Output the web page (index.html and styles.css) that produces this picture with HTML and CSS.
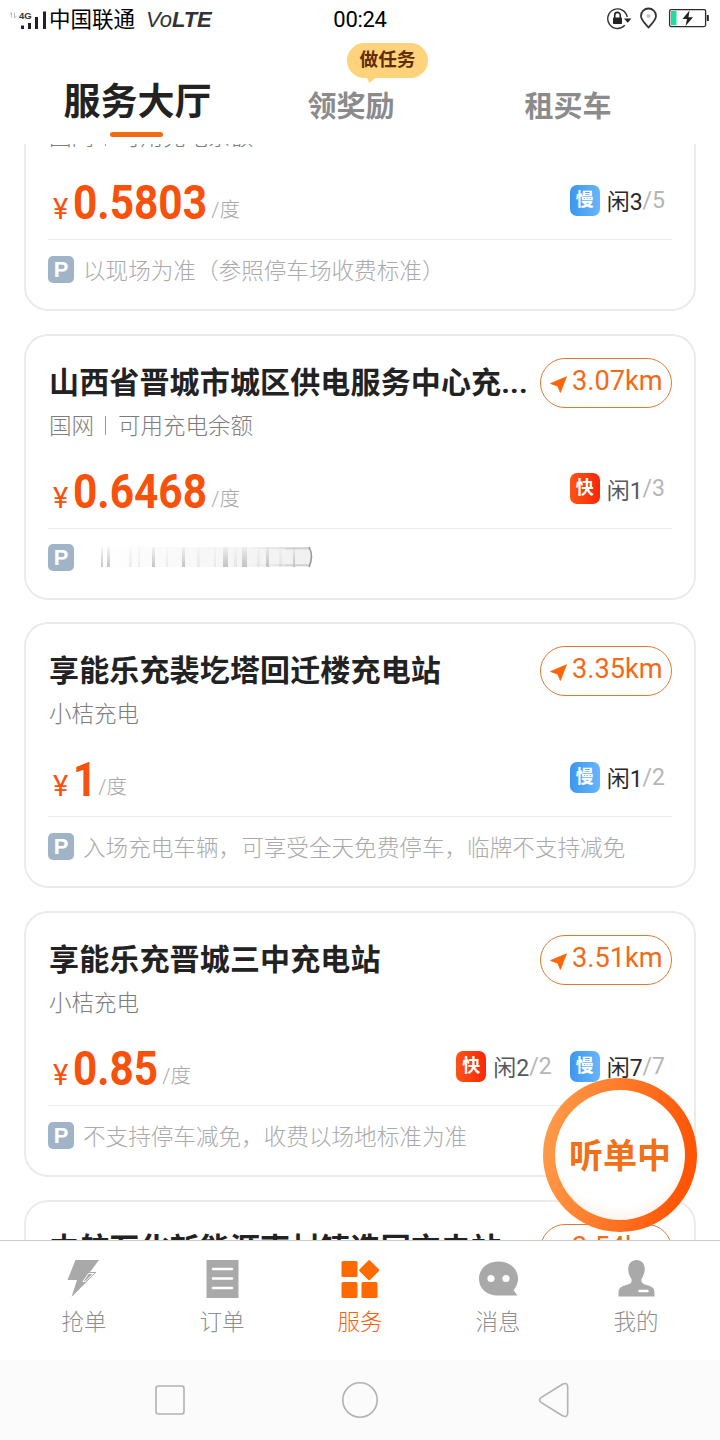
FILE: index.html
```html
<!DOCTYPE html>
<html lang="zh-CN">
<head>
<meta charset="utf-8">
<title>服务大厅</title>
<link rel="stylesheet" href="styles.css">
</head>
<body>
<svg class="defs" width="0" height="0" aria-hidden="true">
  <symbol id="arrow" viewBox="0 0 17 17"><path d="M0.5 7.5 L16.5 0.8 L10.4 16.5 L7.8 10.2 Z" fill="#f9660b" stroke="#f9660b" stroke-width="0.8" stroke-linejoin="round"/></symbol>
</svg>
<div class="screen">
  <header class="status">
    <div class="status-left">
      <svg class="signal" width="40" height="24" viewBox="0 0 40 24">
        <path d="M2.5 6.5V1.5L0.5 3.5M5.5 1.5V7L7.5 5" fill="none" stroke="#bbb" stroke-width="1"/>
        <text x="10" y="8" class="g4">4G</text>
        <path d="M12 14.5h3v3.500h-3zM19 12h3v6h-3zM26 6h3v12h-3zM34 0.500h3v17.500h-3z" fill="#222"/>
      </svg>
      <span class="carrier">中国联通</span>
      <span class="volte">Vo<b>LTE</b></span>
    </div>
    <span class="clock">00:24</span>
    <div class="status-right">
      <svg width="102" height="24" viewBox="0 0 102 24">
        <path d="M17.8 18.300A9.800 9.800 0 1 1 20.200 10" fill="none" stroke="#333" stroke-width="1.400"/>
        <path d="M17 11.500h7.400l-3.700 4.200z" fill="#222"/>
        <rect x="6" y="10.500" width="9" height="6.500" rx="0.800" fill="#222"/>
        <path d="M7.700 11V8.200a2.800 2.800 0 0 1 5.600 0V11" fill="none" stroke="#222" stroke-width="1.600"/>
        <path d="M41.500 20.500C38 16.500 34 13 34 9a7.500 7.500 0 0 1 15 0c0 4-4 7.500-7.500 11.500z" fill="none" stroke="#333" stroke-width="1.800"/>
        <circle cx="41.500" cy="9" r="2" fill="#c4c4c4"/>
        <rect x="62.600" y="2.600" width="36" height="17" rx="1.500" fill="none" stroke="#2b2b33" stroke-width="1.300"/>
        <rect x="64" y="4" width="5.500" height="14.200" fill="#22dba0"/>
        <path d="M99.800 8h2v6h-2z" fill="#222"/>
        <path d="M82.500 3.500L75.500 12h4.500l-1.500 7 7.500-8.800h-4.500z" fill="#222"/>
      </svg>
    </div>
  </header>
  <nav class="tabs">
    <div class="tab tab-on">服务大厅</div>
    <div class="tab tab-mid">领奖励<span class="bubble">做任务</span></div>
    <div class="tab tab-end">租买车</div>
  </nav>

  <main class="list">
    <section class="card">
      <div class="head"><h2>充电站</h2></div>
      <div class="sub">国网<i></i>可用充电余额</div>
      <div class="mid">
        <div class="price"><span class="yen">¥</span><svg width="134" height="40"><text x="0" y="38" textLength="134" lengthAdjust="spacingAndGlyphs">0.5803</text></svg><span class="unit">/度</span></div>
        <div class="ports"><span class="port"><b class="chip slow">慢</b><em class="dark">闲3</em>/5</span></div>
      </div>
      <div class="park"><b>P</b><span>以现场为准（参照停车场收费标准）</span></div>
    </section>

    <section class="card">
      <div class="head"><h2>山西省晋城市城区供电服务中心充...</h2><span class="dist"><svg width="17" height="17"><use href="#arrow"/></svg>3.07km</span></div>
      <div class="sub">国网<i></i>可用充电余额</div>
      <div class="mid">
        <div class="price"><span class="yen">¥</span><svg width="134" height="40"><text x="0" y="38" textLength="134" lengthAdjust="spacingAndGlyphs">0.6468</text></svg><span class="unit">/度</span></div>
        <div class="ports"><span class="port"><b class="chip fast">快</b><em>闲1</em>/3</span></div>
      </div>
      <div class="park"><b>P</b>
        <svg class="smear" width="222" height="26" viewBox="0 0 222 26">
          <defs>
            <linearGradient id="fade" x1="0" x2="1" y1="0" y2="0"><stop offset="0" stop-color="#bbb" stop-opacity="0"/><stop offset="1" stop-color="#bbb"/></linearGradient>
            <linearGradient id="down" x1="0" x2="0" y1="0" y2="1"><stop offset="0" stop-color="#999" stop-opacity="0.1"/><stop offset="1" stop-color="#999" stop-opacity="0.75"/></linearGradient>
          </defs>
          <rect x="0" y="3" width="216" height="20" fill="url(#fade)" opacity="0.22"/>
          <path d="M6 3h2v20h-2zM12 3h3v20h-3zM57 3h3v20h-3zM87 3h3v20h-3zM128 3h5v20h-5zM147 3h5v20h-5zM171 3h3v20h-3zM198 3h2v20h-2z" fill="url(#down)" opacity="0.75"/>
          <path d="M34 3h3v20h-3zM43 3h2v20h-2zM71 3h2v20h-2zM102 3h3v20h-3zM119 3h2v20h-2zM139 3h3v20h-3zM162 3h3v20h-3zM184 3h3v20h-3z" fill="url(#down)" opacity="0.22"/>
          <path d="M155 4h60M155 21h60" stroke="url(#fade)" stroke-width="2" opacity="0.5"/>
          <path d="M190 4h25v1.500h-25zM190 21h25v1h-25z" fill="#ccc" opacity="0.7"/>
          <path d="M214 3q5 9 0 20" fill="none" stroke="#999" stroke-width="1.500"/>
        </svg>
      </div>
    </section>

    <section class="card">
      <div class="head"><h2>享能乐充裴圪塔回迁楼充电站</h2><span class="dist"><svg width="17" height="17"><use href="#arrow"/></svg>3.35km</span></div>
      <div class="sub">小桔充电</div>
      <div class="mid">
        <div class="price"><span class="yen">¥</span><svg width="21" height="40"><text x="0" y="38" textLength="24" lengthAdjust="spacingAndGlyphs">1</text></svg><span class="unit">/度</span></div>
        <div class="ports"><span class="port"><b class="chip slow">慢</b><em class="dark">闲1</em>/2</span></div>
      </div>
      <div class="park"><b>P</b><span>入场充电车辆，可享受全天免费停车，临牌不支持减免</span></div>
    </section>

    <section class="card">
      <div class="head"><h2>享能乐充晋城三中充电站</h2><span class="dist"><svg width="17" height="17"><use href="#arrow"/></svg>3.51km</span></div>
      <div class="sub">小桔充电</div>
      <div class="mid">
        <div class="price"><span class="yen">¥</span><svg width="85" height="40"><text x="0" y="38" textLength="85" lengthAdjust="spacingAndGlyphs">0.85</text></svg><span class="unit">/度</span></div>
        <div class="ports"><span class="port"><b class="chip fast">快</b><em>闲2</em>/2</span><span class="port"><b class="chip slow">慢</b><em class="dark">闲7</em>/7</span></div>
      </div>
      <div class="park"><b>P</b><span>不支持停车减免，收费以场地标准为准</span></div>
    </section>

    <section class="card">
      <div class="head"><h2>中航石化新能源南村铸造园充电站</h2><span class="dist"><svg width="17" height="17"><use href="#arrow"/></svg>3.54km</span></div>
    </section>
  </main>

  <div class="fab"><span>听单中</span></div>

  <nav class="tabbar">
    <div class="item">
      <svg width="40" height="40" viewBox="0 0 40 40"><path d="M11.500 1H35L26 13h6.500L7.500 38l5.500-17H3.500z" fill="#a9a9a9"/><path d="M29.500 14.500l-5 0-5.500 8 2 0z" fill="#a9a9a9" stroke="#fff" stroke-width="1"/></svg>
      <span>抢单</span>
    </div>
    <div class="item">
      <svg width="40" height="40" viewBox="0 0 40 40"><path d="M4.500 1h32v38h-32z" fill="#a9a9a9"/><path d="M11 10h19M11 19.500h19M11 29h19" stroke="#fff" stroke-width="2.600" stroke-linecap="round"/></svg>
      <span>订单</span>
    </div>
    <div class="item on">
      <svg width="40" height="40" viewBox="0 0 40 40" fill="#ff6a00"><rect x="1.500" y="2" width="16" height="16" rx="1.500"/><rect x="1.500" y="23" width="16" height="16" rx="1.500"/><rect x="21.500" y="23" width="16" height="16" rx="1.500"/><rect x="21.700" y="3.700" width="15" height="15" rx="1.500" transform="rotate(45 29.200 11.200)"/></svg>
      <span>服务</span>
    </div>
    <div class="item">
      <svg width="40" height="40" viewBox="0 0 40 40"><path d="M20.500 2.500C31 2.500 40 9.500 40 19.500c0 5-1.800 8.500-4.500 11.500l4 5.500H21C9 37 1 30 1 19.500S10 2.500 20.500 2.500z" fill="#a9a9a9"/><circle cx="13" cy="19.500" r="3.600" fill="#fff"/><circle cx="28" cy="19.500" r="3.600" fill="#fff"/></svg>
      <span>消息</span>
    </div>
    <div class="item">
      <svg width="40" height="40" viewBox="0 0 40 40"><path d="M20.500 1c5 0 8.500 4 8.300 9.500-.2 4-1.500 6.500-3.300 9.500-.7 3.500 1.200 5 5 6 5 1.300 8 2.500 8 8v3.500h-36V34c0-5.500 3-6.700 8-8 4-1 5.700-2.500 5-6-1.800-3-3.200-5.500-3.300-9.500C12 5 15.500 1 20.500 1z" fill="#a9a9a9"/><path d="M23.500 32h8" stroke="#fff" stroke-width="2.500" stroke-linecap="round"/></svg>
      <span>我的</span>
    </div>
  </nav>

  <footer class="sysbar">
    <svg width="720" height="80" viewBox="0 0 720 80" fill="none" stroke="#b2b2b2" stroke-width="1.600">
      <rect x="156" y="26" width="28" height="28" rx="2.500"/>
      <circle cx="360" cy="40" r="17.200"/>
      <path d="M541 37.600L562.500 24.300Q567.500 22 567.700 27V53Q567.500 58 562.500 55.700L541 42.400Q538 40 541 37.600z"/>
    </svg>
  </footer>
</div>
</body>
</html>
```
FILE: styles.css
```css
* { box-sizing: border-box; margin: 0; padding: 0; }
body { background: #fff; font-family: Roboto, "Noto Sans CJK SC", sans-serif; }
.defs { display: block; }
svg { display: block; flex: none; }
.screen { position: relative; width: 720px; height: 1440px; display: flex; flex-direction: column; overflow: hidden; background: #fff; }

.status { height: 40px; display: grid; grid-template-columns: 1fr auto 1fr; align-items: center; color: #000; }
.status-left { display: flex; align-items: center; padding-left: 9px; }
.signal { margin-top: 5px; }
.g4 { font: bold 9.500px "Liberation Sans", sans-serif; fill: #333; }
.carrier { font-size: 21.500px; line-height: 38px; }
.volte { margin-left: 11px; font: italic 22px/38px "Liberation Sans", sans-serif; color: #333; letter-spacing: -0.100px; }
.clock { font-size: 22px; line-height: 40px; letter-spacing: -0.300px; }
.status-right { display: flex; justify-content: flex-end; padding-right: 11px; margin-top: -3px; }

.tabs { height: 104px; display: grid; grid-template-columns: 275px 152px 282px; align-items: center; text-align: center; color: #8b8b8b; }
.tab { position: relative; font-size: 29px; font-weight: 700; line-height: 50px; margin-top: 30px; white-space: nowrap; }
.tab-on { font-size: 37px; color: #222; margin-top: 22px; }
.tab-on::after { content: ""; position: absolute; left: 110px; bottom: -9px; width: 53px; height: 5px; border-radius: 3px; background: #f26b13; }
.bubble { position: absolute; left: 72px; top: -39px; width: 81px; height: 35px; border-radius: 18px; background: #ffd37b; color: #612d00; font-size: 18.700px; line-height: 35px; }
.bubble::after { content: ""; position: absolute; left: 20px; top: 34px; border-top: 6px solid #ffd37b; border-left: 2px solid transparent; border-right: 8px solid transparent; }

.list { height: 1096px; overflow: hidden; padding: 0 24px; display: flex; flex-direction: column; gap: 22.700px; }
.card { flex: none; height: 266px; border: 2px solid #ebebeb; border-radius: 24px; padding: 22px; }
.card:first-child { margin-top: -99px; }
.head { height: 50px; display: flex; align-items: center; justify-content: space-between; }
h2 { padding-left: 1px; font-size: 30px; letter-spacing: 0.150px; font-weight: 700; line-height: 48px; color: #222; white-space: nowrap; }
.dist { flex: none; width: 132px; height: 50px; border: 1px solid #dd7930; border-radius: 25px; display: flex; align-items: center; padding: 0 0 4px 9px; font-size: 27.200px; color: #f26a18; }
.dist svg { margin: 7px 5px 0 0; }
.sub { display: flex; align-items: center; height: 32px; padding-left: 1px; font-size: 22.500px; font-weight: 300; color: #7d7d7d; }
.sub i { width: 1px; height: 19px; background: #999; margin: 3px 12px 0 11px; }
.mid { height: 89px; display: flex; justify-content: space-between; border-bottom: 1px solid #ececec; }
.price { display: flex; align-items: flex-end; padding: 0 0 18px 5px; color: #f8510c; }
.price svg { margin: 0 4px 0 5px; overflow: visible; }
.price text { font-size: 49px; font-weight: 700; fill: #f8510c; }
.yen { font-size: 29px; line-height: 24px; }
.unit { font-size: 20.500px; line-height: 22px; font-weight: 300; color: #aaa; }
.ports { display: flex; gap: 18px; padding: 34px 7px 0 0; }
.port { display: flex; align-items: center; height: 30px; font-size: 23px; color: #b5b5b5; font-weight: 400; }
.port em { font-style: normal; color: #555861; }
.port .dark { color: #292929; }
.chip { width: 30px; height: 31px; margin-right: 7px; border-radius: 7px; color: #fff; font-size: 18px; line-height: 30px; text-align: center; }
.slow { background: linear-gradient(90deg, #3d96ee, #66b6fa); }
.fast { background: linear-gradient(90deg, #fb5514, #fa2609); }
.park { display: flex; align-items: center; height: 58px; font-size: 22.600px; font-weight: 300; color: #aaa; white-space: nowrap; }
.park b { width: 26px; height: 27px; margin-right: 9px; border-radius: 5px; background: #a0b4c7; color: #fff; font: bold 22px/28px "Liberation Sans", sans-serif; text-align: center; }
.smear { margin: -2px 0 0 12px; }

.fab { position: absolute; left: 543px; top: 1078px; width: 154px; height: 154px; padding: 12px; border-radius: 50%; background: linear-gradient(100deg, #ffa04e, #ff5505 88%); }
.fab span { display: block; height: 130px; border-radius: 50%; text-align: center; font-size: 34px; line-height: 132px; font-weight: 700; color: #f27018; background: radial-gradient(circle at 50% 42%, #fff 62%, #ffe0d0 100%); }

.tabbar { height: 120px; border-top: 1px solid #ccc; background: #fff; display: grid; grid-template-columns: repeat(5, 138px); padding: 18px 0 0 15px; position: relative; }
.item { display: flex; flex-direction: column; align-items: center; font-size: 22.500px; line-height: 46px; font-weight: 300; color: #8e8e8e; }
.on { color: #f26414; }
.sysbar { height: 80px; background: #fbfbfb; }
```
